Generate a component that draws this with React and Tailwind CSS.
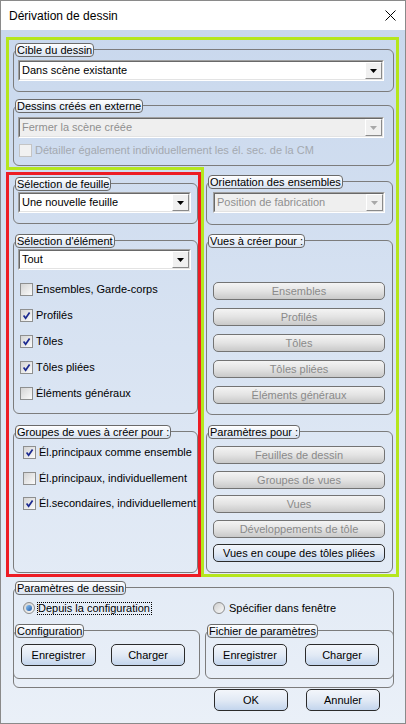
import React from 'react';

const GREEN = 'border-[#b5e61d]';

function Group({ label, className = '', children }) {
  return (
    <div className={`relative border border-[#7c7c7c] rounded-[6px] ${className}`}>
      <span className="absolute left-[1px] top-[-7px] h-[14px] px-[1px] border border-[#6a6a6a] rounded-[4px] bg-linear-to-b from-white to-[#d8e2f0] leading-[12px] whitespace-nowrap text-black">
        {label}
      </span>
      {children}
    </div>
  );
}

function Select({ value, disabled, className = '' }) {
  return (
    <div className={`flex h-[21px] border border-t-[#a0a0a0] border-l-[#a0a0a0] border-b-white border-r-white ${className}`}>
      <div className={`flex flex-1 border border-t-[#696969] border-l-[#696969] border-b-[#e3e3e3] border-r-[#e3e3e3] ${disabled ? 'bg-[#efefef]' : 'bg-white'}`}>
        <span className={`flex-1 pl-[2px] leading-[17px] whitespace-nowrap ${disabled ? 'text-[#8f8f8f]' : 'text-black'}`}>{value}</span>
        <span className="w-[17px] flex items-center justify-center bg-[#f0f0f0] border border-t-white border-l-white border-b-[#8a8a8a] border-r-[#8a8a8a]">
          <svg width="7" height="4" viewBox="0 0 7 4">
            <path d="M0 0h7L3.5 4z" fill={disabled ? '#a8a8a8' : '#000'} />
          </svg>
        </span>
      </div>
    </div>
  );
}

function Check({ label, checked, disabled, className = '' }) {
  return (
    <div className={`flex items-center h-[13px] gap-[2px] ${className}`}>
      <span
        className={`w-[13px] h-[13px] shrink-0 flex items-center justify-center border ${
          disabled
            ? 'border-[#c4c4c4] bg-[#f1f1f1]'
            : 'border-[#8e8f8f] bg-linear-to-br from-[#d4d4d4] to-[#fbfbfb]'
        }`}
      >
        {checked && (
          <svg width="9" height="9" viewBox="0 0 9 9">
            <path d="M1.6 4.6 L3.6 7.2 L7.6 1.4" stroke="#1c2a90" strokeWidth="1.7" fill="none" />
          </svg>
        )}
      </span>
      <span className={`ml-[1px] leading-[13px] whitespace-nowrap ${disabled ? 'text-[#a4a9b0]' : 'text-black'}`}>{label}</span>
    </div>
  );
}

function Btn({ children, disabled, className = '' }) {
  return (
    <div
      className={`flex items-center justify-center rounded-[5px] border whitespace-nowrap ${
        disabled
          ? 'border-[#737373] bg-linear-to-b from-[#f4f4f4] via-[#e3e3e3] to-[#c9c9c9] text-[#8a8a8a]'
          : 'border-[#2b2b2b] bg-linear-to-b from-[#f3f6fb] via-[#e2eaf5] to-[#c3d5ed] text-black'
      } ${className}`}
    >
      {children}
    </div>
  );
}

function Radio({ checked }) {
  return (
    <span className="w-[12px] h-[12px] shrink-0 rounded-full border border-[#8c8c8c] bg-linear-to-br from-[#cfcfcf] to-[#fafafa] flex items-center justify-center">
      {checked && <span className="w-[6px] h-[6px] rounded-full bg-linear-to-br from-[#8fc4f2] to-[#1c5aa8]" />}
    </span>
  );
}

export default function App() {
  return (
    <div className="w-[406px] h-[724px] border border-[#8a8a8a] flex flex-col font-['Liberation_Sans',Arial,sans-serif] text-[11px] text-black overflow-hidden">
      {/* Title bar */}
      <div className="h-[29px] shrink-0 bg-white flex items-center justify-between pl-[8px] pr-[9px]">
        <span className="text-[12px]">Dérivation de dessin</span>
        <svg width="11" height="11" viewBox="0 0 11 11">
          <path d="M0.5 0.5 L10.5 10.5 M10.5 0.5 L0.5 10.5" stroke="#000" strokeWidth="1" />
        </svg>
      </div>

      {/* Body */}
      <div className="flex-1 bg-linear-to-b from-[#c9d8ed] to-[#eaf0f8] pt-[7px] pl-[5px]">
        {/* Top highlighted area */}
        <div className={`w-[393px] border-t-[3px] border-x-[3px] ${GREEN} pb-[1px]`}>
          <Group label="Cible du dessin" className="mt-[9px] ml-[4px] w-[381px] pt-[10px] pb-[10px]">
            <Select value="Dans scène existante" className="ml-[4px] w-[366px]" />
          </Group>
          <Group label="Dessins créés en externe" className="mt-[13px] ml-[4px] w-[381px] pt-[11px] pb-[8px]">
            <Select value="Fermer la scène créée" disabled className="ml-[4px] w-[366px]" />
            <Check
              label="Détailler également individuellement les él. sec. de la CM"
              disabled
              className="mt-[6px] ml-[5px]"
            />
          </Group>
        </div>

        <div className="flex">
          {/* Left column */}
          <div className="w-[195px] flex flex-col">
            <div className="h-[3px] bg-[#b5e61d]" />
            <div className="mt-[2px] h-[405px] border-[3px] border-[#ed1c24] flex flex-col">
              <Group label="Sélection de feuille" className="mt-[8px] ml-[4px] w-[185px] pt-[8px] pb-[10px]">
                <Select value="Une nouvelle feuille" className="ml-[4px] w-[173px]" />
              </Group>
              <Group label="Sélection d'élément" className="mt-[16px] ml-[4px] w-[185px] pt-[8px] pb-[13px]">
                <Select value="Tout" className="ml-[4px] w-[173px]" />
                <div className="mt-[13px] ml-[6px] flex flex-col gap-[13px]">
                  <Check label="Ensembles, Garde-corps" />
                  <Check label="Profilés" checked />
                  <Check label="Tôles" checked />
                  <Check label="Tôles pliées" checked />
                  <Check label="Éléments généraux" />
                </div>
              </Group>
              <Group label="Groupes de vues à créer pour :" className="mt-[17px] ml-[4px] w-[185px] flex-1 mb-[1px] pt-[14px]">
                <Check label="Él.principaux comme ensemble" checked className="ml-[9px]" />
                <Check label="Él.principaux, individuellement" className="ml-[9px] mt-[13px]" />
                <Check label="Él.secondaires, individuellement" checked className="ml-[9px] mt-[12px]" />
              </Group>
            </div>
          </div>

          {/* Right column */}
          <div className={`w-[198px] h-[410px] border-l-[3px] border-r-[3px] border-b-[3px] ${GREEN} flex flex-col`}>
            <Group label="Orientation des ensembles" className="mt-[14px] ml-[2px] w-[187px] pt-[10px] pb-[11px]">
              <Select value="Position de fabrication" disabled className="ml-[6px] w-[172px]" />
            </Group>
            <Group label="Vues à créer pour :" className="mt-[15px] ml-[2px] w-[187px] pt-[41px] pb-[10px]">
              <div className="ml-[6px] w-[172px] flex flex-col gap-[8px]">
                <Btn disabled className="h-[18px]">Ensembles</Btn>
                <Btn disabled className="h-[18px]">Profilés</Btn>
                <Btn disabled className="h-[18px]">Tôles</Btn>
                <Btn disabled className="h-[18px]">Tôles pliées</Btn>
                <Btn disabled className="h-[18px]">Éléments généraux</Btn>
              </div>
            </Group>
            <Group label="Paramètres pour :" className="mt-[16px] ml-[2px] w-[187px] flex-1 mb-[1px] pt-[14px]">
              <div className="ml-[6px] w-[172px] flex flex-col">
                <Btn disabled className="h-[18px]">Feuilles de dessin</Btn>
                <Btn disabled className="h-[18px] mt-[7px]">Groupes de vues</Btn>
                <Btn disabled className="h-[18px] mt-[6px]">Vues</Btn>
                <Btn disabled className="h-[18px] mt-[7px]">Développements de tôle</Btn>
                <Btn className="h-[18px] mt-[6px]">Vues en coupe des tôles pliées</Btn>
              </div>
            </Group>
          </div>
        </div>

        {/* Drawing parameters */}
        <Group label="Paramètres de dessin" className="mt-[10px] ml-[7px] w-[381px] pt-[14px] pb-[8px]">
          <div className="flex h-[12px] items-center">
            <div className="w-[190px] flex items-center">
              <span className="ml-[9px]"><Radio checked /></span>
              <span className="ml-[2px] border border-dotted border-black leading-[11px] pr-[1px]">Depuis la configuration</span>
            </div>
            <span className="ml-[9px]"><Radio /></span>
            <span className="ml-[4px] leading-[12px]">Spécifier dans fenêtre</span>
          </div>
          <div className="flex -mx-[1px] mt-[16px]">
            <Group label="Configuration" className="w-[187px] pt-[13px] pb-[12px]">
              <div className="flex">
                <Btn className="h-[22px] w-[75px] ml-[7px]">Enregistrer</Btn>
                <Btn className="h-[22px] w-[74px] ml-[15px]">Charger</Btn>
              </div>
            </Group>
            <Group label="Fichier de paramètres" className="w-[189px] ml-auto pt-[13px] pb-[12px]">
              <div className="flex">
                <Btn className="h-[22px] w-[74px] ml-[7px]">Enregistrer</Btn>
                <Btn className="h-[22px] w-[74px] ml-[18px]">Charger</Btn>
              </div>
            </Group>
          </div>
        </Group>

        <div className="flex mt-[1px] ml-[208px]">
          <Btn className="h-[22px] w-[74px]">OK</Btn>
          <Btn className="h-[22px] w-[74px] ml-[18px]">Annuler</Btn>
        </div>
      </div>
    </div>
  );
}
